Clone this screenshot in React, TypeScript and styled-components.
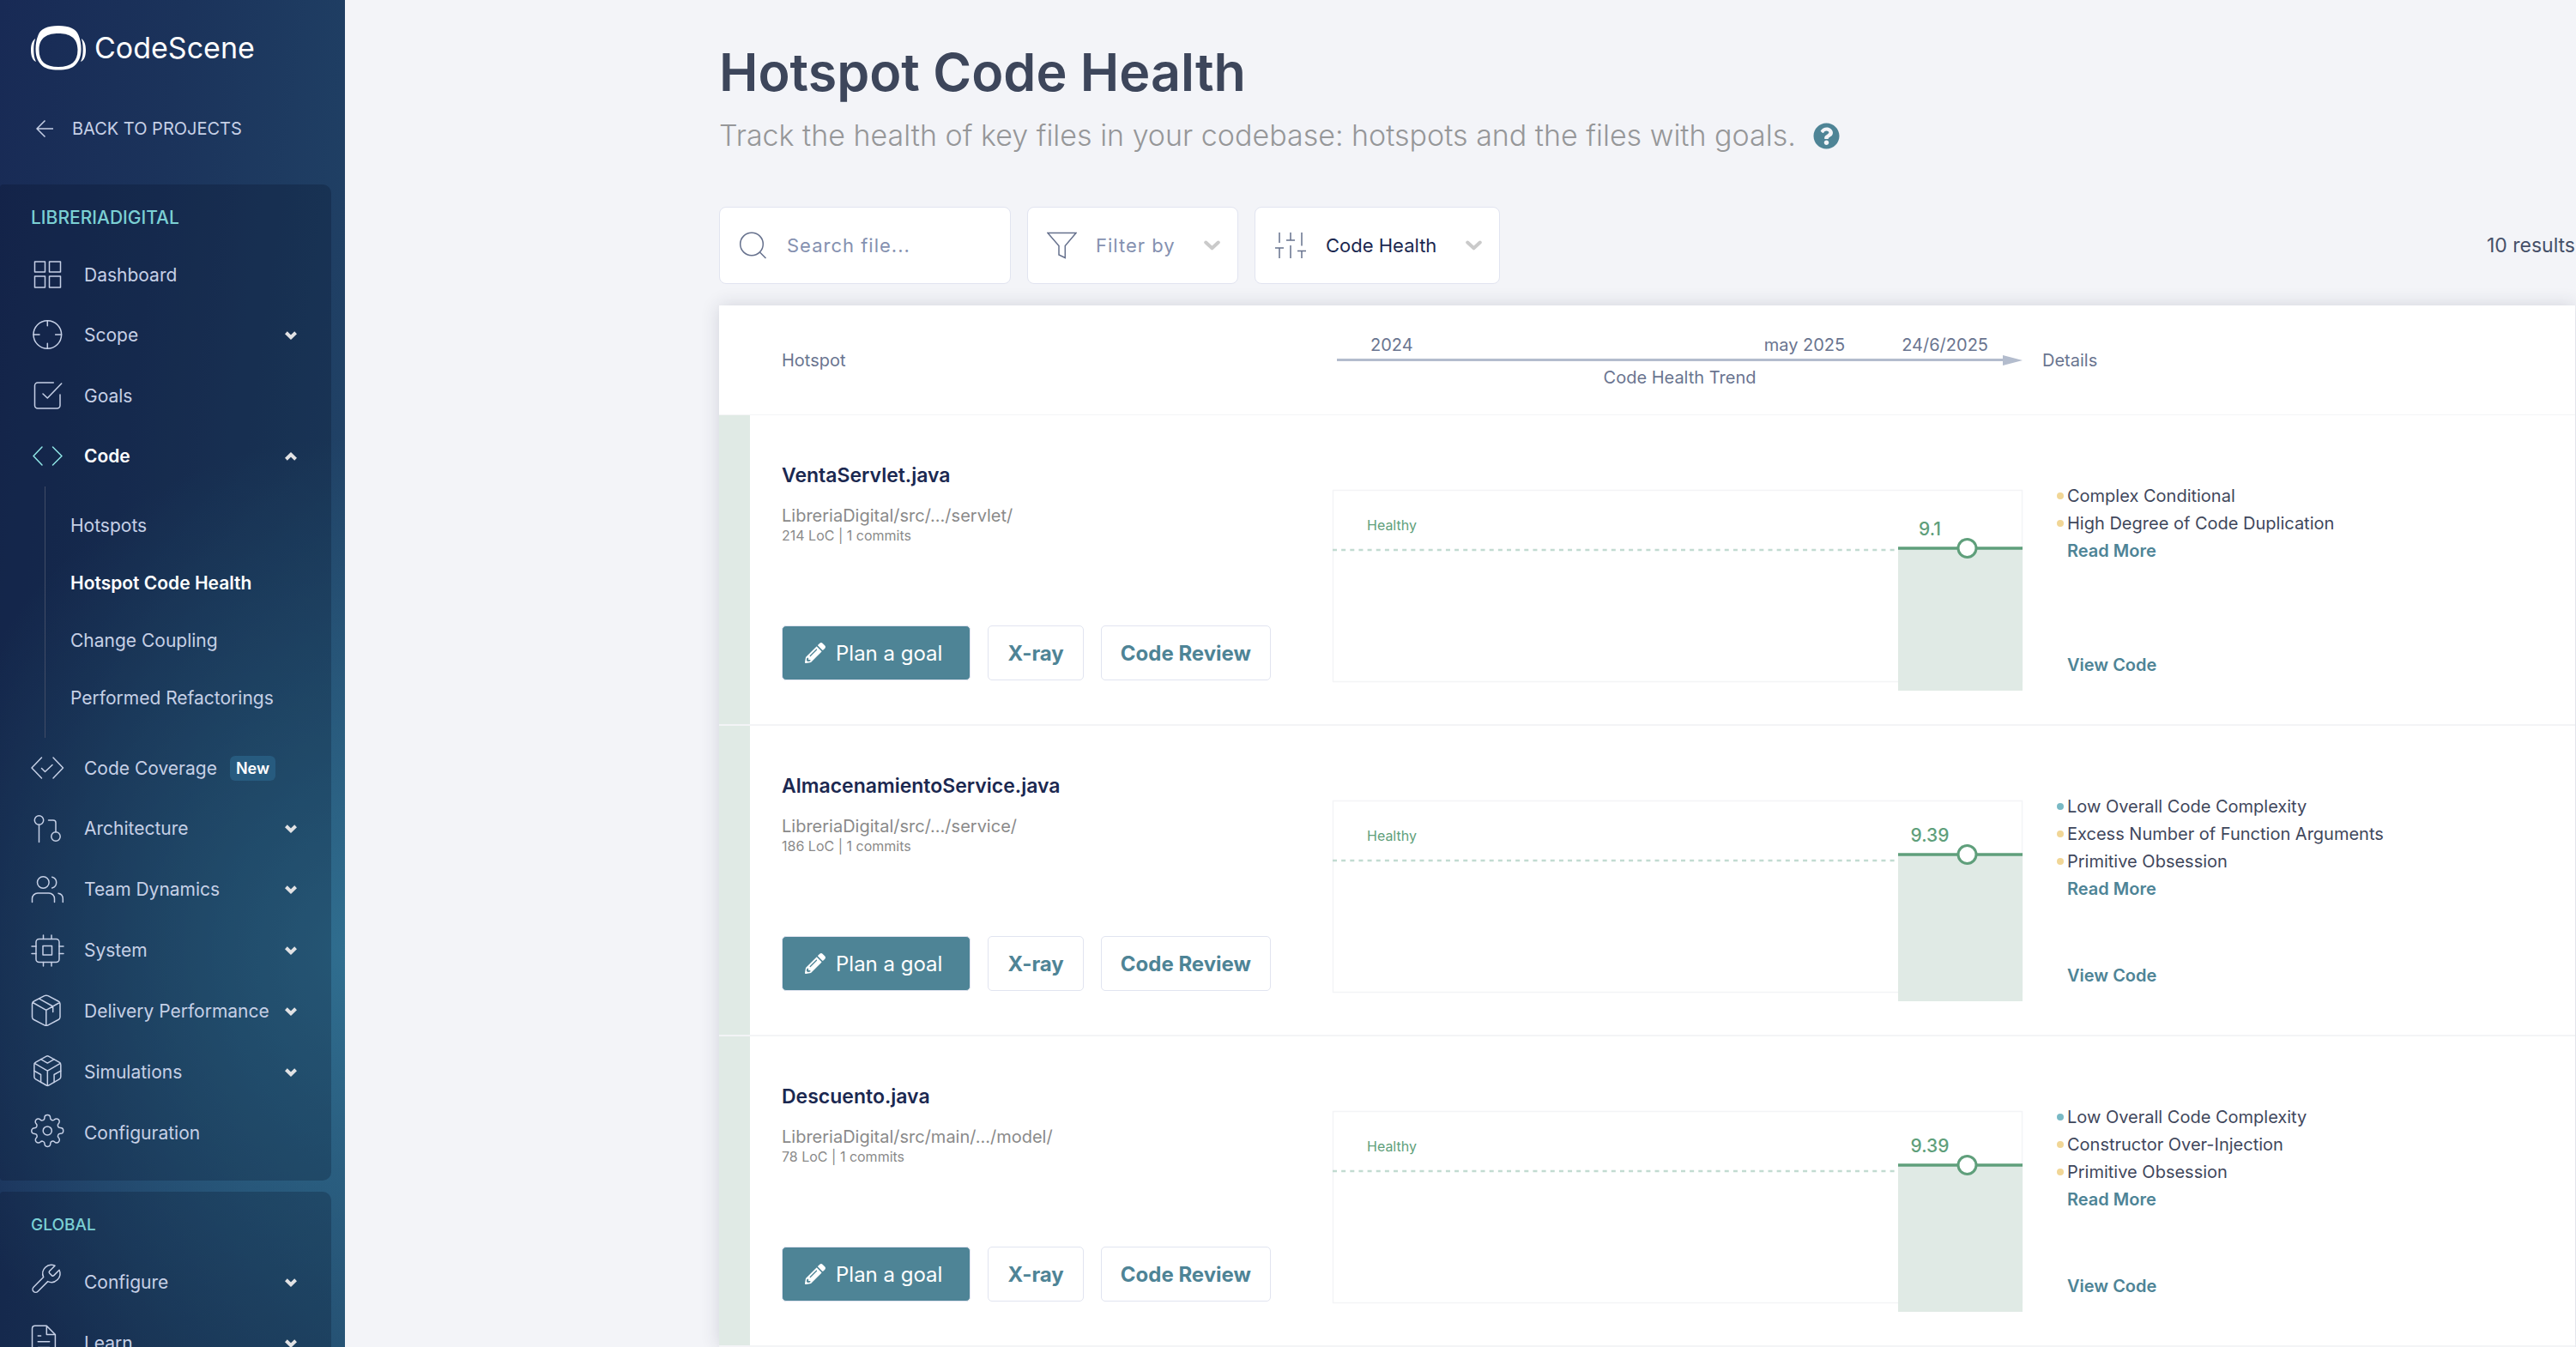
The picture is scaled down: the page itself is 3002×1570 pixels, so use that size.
import React from 'react';
import styled, { createGlobalStyle, css } from 'styled-components';
import { FaPencilAlt, FaQuestionCircle } from 'react-icons/fa';

const color = {
  page: '#f3f4f8',
  ink: '#3f475c',
  title: '#1b2850',
  slate: '#6a7590',
  muted: '#8591b0',
  grey: '#8a8a8a',
  teal: '#4e8496',
  aqua: '#7bd0d4',
  nav: '#c6d0e6',
  green: '#5f9f7b',
  mint: '#e0eae5',
  line: '#f3f4f6',
  border: '#e1e4f0',
  yellow: '#f1d696',
  cyan: '#79b9c5',
};

const GlobalStyle = createGlobalStyle`
  *, *::before, *::after { box-sizing: border-box; }
  body {
    margin: 0;
    background: ${color.page};
    color: ${color.ink};
    font-family: Inter, "Liberation Sans", sans-serif;
    font-size: 20px;
  }
  button, input, select { font: inherit; color: inherit; }
  a { color: inherit; text-decoration: none; }
  ul { list-style: none; margin: 0; padding: 0; }
`;

const Page = styled.div`
  display: flex;
  min-height: 100vh;
`;

/* ---------- Sidebar ---------- */

const Sidebar = styled.aside`
  position: sticky;
  top: 0;
  flex: none;
  width: 402px;
  height: 100vh;
  overflow: hidden;
  display: flex;
  flex-direction: column;
  background:
    radial-gradient(ellipse 520px 600px at 410px 1110px, rgba(50, 117, 150, 0.85), rgba(50, 117, 150, 0) 100%),
    linear-gradient(98deg, #182a55 0%, #1b335b 35%, #234a6c 100%);

  > * { flex: none; }
`;

const Brand = styled.a`
  display: flex;
  align-items: center;
  gap: 10px;
  height: 52px;
  margin: 30px 36px 0;
  color: #fff;
  font-size: 34px;
  line-height: 40px;

  svg { flex: none; }
`;

const BackLink = styled.a`
  display: flex;
  align-items: center;
  gap: 22px;
  height: 40px;
  margin: 48px 42px 45px;
  color: ${color.nav};
  font-size: 20px;
`;

const Panels = styled.nav`
  display: flex;
  flex-direction: column;
  gap: 13px;
  padding-right: 16px;
`;

const Panel = styled.section`
  padding: 26px 0 21px;
  border-radius: 4px 10px 10px 4px;
  background: rgba(5, 12, 35, 0.24);
`;

const PanelTitle = styled.h2<{ $small?: boolean }>`
  margin: 0 0 18px;
  padding: 0 36px;
  color: ${color.aqua};
  font-size: ${(p) => (p.$small ? 19 : 21)}px;
  font-weight: 500;
  line-height: 26px;
`;

const rowStyle = css<{ $active?: boolean }>`
  display: flex;
  align-items: center;
  width: 100%;
  padding: 0 40px 0 36px;
  border: 0;
  background: none;
  color: ${(p) => (p.$active ? '#fff' : color.nav)};
  font-size: 21px;
  font-weight: ${(p) => (p.$active ? 600 : 400)};
  text-align: left;
  white-space: nowrap;
`;

const NavLink = styled.a<{ $active?: boolean }>`
  ${rowStyle}
  height: 70px;
`;

const NavToggle = styled.button<{ $active?: boolean }>`
  ${rowStyle}
  height: 71px;
`;

const NavIcon = styled.svg<{ $active?: boolean }>`
  flex: none;
  width: 38px;
  height: 38px;
  margin-right: 24px;
  overflow: visible;
  fill: none;
  stroke: ${(p) => (p.$active ? '#8fe6e6' : color.nav)};
  stroke-width: 1.5;
  stroke-linecap: round;
  stroke-linejoin: round;

  * { vector-effect: non-scaling-stroke; }
`;

const NavChevron = styled.svg`
  flex: none;
  width: 14px;
  height: 10px;
  margin-left: auto;
  fill: none;
  stroke: #e2e2e4;
  stroke-width: 4;
`;

const NewBadge = styled.span`
  margin-left: 15px;
  padding: 0 7px;
  border-radius: 6px;
  background: #275b7f;
  color: #fff;
  font-size: 18px;
  font-weight: 600;
  line-height: 29px;
`;

const SubMenu = styled.ul`
  margin-left: 52px;
  padding: 12px 0 13px 29px;
  border-left: 1px solid #414c66;
`;

const SubLink = styled.a<{ $active?: boolean }>`
  display: flex;
  align-items: center;
  height: 67px;
  color: ${(p) => (p.$active ? '#fff' : color.nav)};
  font-size: 21px;
  font-weight: ${(p) => (p.$active ? 600 : 400)};
  white-space: nowrap;
`;

/* ---------- Main column ---------- */

const Main = styled.main`
  flex: 1;
  min-width: 0;
  padding: 46px 1px 0 436px;
`;

const Title = styled.h1`
  margin: 0;
  color: #3d465b;
  font-size: 61px;
  font-weight: 600;
  line-height: 76px;
`;

const Subtitle = styled.p`
  display: flex;
  align-items: center;
  gap: 20px;
  margin: 12px 0 59px;
  color: #969799;
  font-size: 34px;
  font-weight: 300;
  line-height: 48px;
  white-space: nowrap;
`;

const HelpButton = styled.button`
  display: flex;
  padding: 0;
  border: 0;
  background: none;
  color: ${color.teal};
  font-size: 31px;
`;

const Toolbar = styled.div`
  display: flex;
  align-items: center;
  gap: 19px;
  margin-bottom: 25px;
`;

const Field = styled.label<{ $width: number }>`
  display: flex;
  align-items: center;
  width: ${(p) => p.$width}px;
  height: 90px;
  padding: 0 20px 0 22px;
  border: 1px solid ${color.border};
  border-radius: 8px;
  background: #fff;
`;

const FieldIcon = styled.svg`
  flex: none;
  height: 32px;
  margin-right: 22px;
  fill: none;
  stroke: #66718d;
  stroke-width: 1.5;
`;

const FieldChevron = styled.svg`
  flex: none;
  width: 19px;
  height: 12px;
  fill: none;
  stroke: #cacaca;
  stroke-width: 4;
  stroke-linecap: round;
  stroke-linejoin: round;
`;

const SearchInput = styled.input`
  flex: 1;
  min-width: 0;
  padding: 0;
  border: 0;
  outline: 0;
  background: none;
  font-size: 22px;
  letter-spacing: 1px;

  &::placeholder { color: ${color.muted}; opacity: 1; }
`;

const Select = styled.select<{ $set?: boolean }>`
  flex: 1;
  min-width: 0;
  padding: 0;
  border: 0;
  outline: 0;
  appearance: none;
  background: none;
  color: ${(p) => (p.$set ? color.title : color.muted)};
  font-size: 22px;
  letter-spacing: ${(p) => (p.$set ? 'normal' : '1px')};
`;

const Results = styled.output`
  margin-left: auto;
  color: #465068;
  font-size: 23px;
`;

/* ---------- Table ---------- */

const Table = styled.table`
  width: 100%;
  table-layout: fixed;
  border-collapse: separate;
  border-spacing: 0;
  background: #fff;
  box-shadow: 0 0 20px rgba(40, 45, 70, 0.16);
`;

const Col = styled.col<{ $width?: number }>`
  width: ${(p) => (p.$width ? `${p.$width}px` : 'auto')};
`;

const HeadCell = styled.th<{ $pad?: number }>`
  height: 128px;
  padding: 0 0 0 ${(p) => p.$pad ?? 0}px;
  border-bottom: 1px solid ${color.line};
  color: ${color.slate};
  font-size: 20px;
  font-weight: 400;
  line-height: 24px;
  text-align: left;
`;

const Timeline = styled.div`
  display: flex;
  flex-direction: column;
  padding-top: 2px;
`;

const Dates = styled.div`
  display: flex;
  gap: 66px;
  padding: 0 40px 0 44px;

  span:first-child { margin-right: auto; }
`;

const Arrow = styled.div`
  display: flex;
  align-items: center;
  height: 12px;
  margin-left: 5px;

  &::before {
    content: '';
    flex: 1;
    height: 3px;
    background: #b3bccd;
  }

  &::after {
    content: '';
    border-left: 23px solid #b3bccd;
    border-top: 6px solid transparent;
    border-bottom: 6px solid transparent;
  }
`;

const TrendLabel = styled.div`
  padding: 2px 0 0 5px;
  text-align: center;
`;

const Cell = styled.td`
  height: 362px;
  padding: 0;
  border-bottom: 2px solid ${color.line};
  vertical-align: top;
`;

const StatusCell = styled(Cell)`
  background: ${color.mint};
  background-clip: padding-box;
`;

const Hotspot = styled.div`
  display: flex;
  flex-direction: column;
  height: 309px;
  padding: 54px 0 0 37px;
`;

const FileName = styled.h3`
  margin: 0 0 18px;
  color: ${color.title};
  font-size: 23px;
  font-weight: 600;
  line-height: 32px;
`;

const FilePath = styled.span`
  color: ${color.grey};
  font-size: 20px;
  line-height: 26px;
`;

const FileMeta = styled.span`
  color: ${color.grey};
  font-size: 16px;
  line-height: 20px;
`;

const Actions = styled.div`
  display: flex;
  gap: 20px;
  margin-top: auto;
`;

const Action = styled.button<{ $primary?: boolean }>`
  display: flex;
  align-items: center;
  justify-content: center;
  gap: 12px;
  height: 64px;
  padding: 0 ${(p) => (p.$primary ? 32 : 22)}px 0 ${(p) => (p.$primary ? 26 : 22)}px;
  border: 1px solid ${color.border};
  border-radius: 5px;
  background: ${(p) => (p.$primary ? color.teal : '#fff')};
  color: ${(p) => (p.$primary ? '#fff' : color.teal)};
  font-size: 24px;
  font-weight: ${(p) => (p.$primary ? 400 : 700)};
  white-space: nowrap;
`;

const Chart = styled.svg`
  display: block;
  width: 100%;
  height: auto;
  margin-top: 86px;
  overflow: visible;
`;

const Details = styled.div`
  display: flex;
  flex-direction: column;
  height: 307px;
  padding: 78px 0 0 52px;
  color: ${color.ink};
  font-size: 20px;
  line-height: 32px;
`;

const Finding = styled.li<{ $good?: boolean }>`
  display: flex;
  align-items: center;
  gap: 4px;
  margin-left: -12px;
  white-space: nowrap;

  &::before {
    content: '';
    width: 8px;
    height: 8px;
    border-radius: 50%;
    background: ${(p) => (p.$good ? color.cyan : color.yellow)};
  }
`;

const DetailLink = styled.a<{ $last?: boolean }>`
  margin-top: ${(p) => (p.$last ? 'auto' : 0)};
  color: ${color.teal};
  font-weight: 600;
`;

/* ---------- Icons ---------- */

const icons: Record<string, React.ReactNode> = {
  dashboard: (
    <>
      <rect x="4.5" y="4" width="12" height="12" />
      <rect x="21.5" y="4" width="13" height="12" />
      <rect x="4.5" y="21" width="12" height="13" />
      <rect x="21.5" y="21" width="13" height="13" />
    </>
  ),
  scope: (
    <>
      <circle cx="19.3" cy="18" r="16.3" />
      <path d="M19.3 1.7v6M19.3 28.3v6M3 18h7M28.6 18h7" />
    </>
  ),
  goals: (
    <path d="M26.3 4H8a3.5 3.5 0 0 0-3.5 3.5v23A3.5 3.5 0 0 0 8 34h22.500a3.500 3.500 0 0 0 3.500-3.500V18M14 17l5.300 5L35.700 5" />
  ),
  code: <path d="M13 8 3 18.500 13 29M25.500 8l10.500 10.500L25.500 29" />,
  coverage: <path d="M12.500 7 1 19l11.500 12M26 7l11.500 12L26 31M12.500 19.500l4 4L25 15.500" />,
  architecture: (
    <>
      <circle cx="9.500" cy="9" r="5.200" />
      <circle cx="29" cy="28" r="5.200" />
      <path d="M9.500 14.200V34.500M20.500 9h5.500a3 3 0 0 1 3 3v10.800" />
    </>
  ),
  team: (
    <>
      <circle cx="14.300" cy="10.500" r="6.800" />
      <path d="M1.500 33.500v-4a6.500 6.500 0 0 1 6.500-6.500h13a6.500 6.500 0 0 1 6.500 6.500v4M24.700 4.200a6.600 6.600 0 0 1 0 12.800M32 23.200a6.500 6.500 0 0 1 5.300 6.300v4" />
    </>
  ),
  system: (
    <>
      <rect x="6" y="5.500" width="27" height="27" rx="3.500" />
      <rect x="14" y="13.500" width="10.500" height="10.500" />
      <path d="M14.500 5.500V1M24 5.500V1M14.500 37v-4.500M24 37v-4.500M6 14H1M6 22.500H1M38 14h-5M38 22.500h-5" />
    </>
  ),
  delivery: (
    <path d="M15.800 .7 3.500 7A3.500 3.500 0 0 0 1.500 10v15.500a3.500 3.500 0 0 0 2 3L15.800 34.800a4.500 4.500 0 0 0 4.200 0L32 28.500a3.500 3.500 0 0 0 2-3V10a3.500 3.500 0 0 0-2-3L20 .7a4.500 4.500 0 0 0-4.200 0zM2.200 8.500 17.800 17.300 33.500 8.500M17.800 17.300V35M9.700 4.200l16 8.800v6.500" />
  ),
  simulations: (
    <g transform="translate(-1.3 -3.600) scale(1.720)">
      <path d="M21 16V8a2 2 0 0 0-1-1.730l-7-4a2 2 0 0 0-2 0l-7 4A2 2 0 0 0 3 8v8a2 2 0 0 0 1 1.730l7 4a2 2 0 0 0 2 0l7-4A2 2 0 0 0 21 16z" />
      <path d="M7.500 4.210 12 6.810l4.500-2.600M7.500 19.790V14.600L3 12M21 12l-4.500 2.600v5.190M3.270 6.960 12 12.010l8.730-5.050M12 22.080V12" />
    </g>
  ),
  configuration: (
    <g transform="translate(-.9 -3.200) scale(1.680)">
      <circle cx="12" cy="12" r="3" />
      <path d="M19.400 15a1.650 1.650 0 0 0 .330 1.820l.060.060a2 2 0 0 1 0 2.830 2 2 0 0 1-2.830 0l-.060-.060a1.650 1.650 0 0 0-1.820-.330 1.650 1.650 0 0 0-1 1.510V21a2 2 0 0 1-2 2 2 2 0 0 1-2-2v-.090A1.650 1.650 0 0 0 9 19.400a1.650 1.650 0 0 0-1.820.330l-.060.060a2 2 0 0 1-2.830 0 2 2 0 0 1 0-2.830l.060-.060a1.650 1.650 0 0 0 .330-1.820 1.650 1.650 0 0 0-1.510-1H3a2 2 0 0 1-2-2 2 2 0 0 1 2-2h.090A1.650 1.650 0 0 0 4.600 9a1.650 1.650 0 0 0-.330-1.820l-.060-.060a2 2 0 0 1 0-2.830 2 2 0 0 1 2.830 0l.060.060a1.650 1.650 0 0 0 1.820.330H9a1.650 1.650 0 0 0 1-1.510V3a2 2 0 0 1 2-2 2 2 0 0 1 2 2v.090a1.650 1.650 0 0 0 1 1.510 1.650 1.650 0 0 0 1.820-.330l.060-.060a2 2 0 0 1 2.830 0 2 2 0 0 1 0 2.830l-.060.060a1.650 1.650 0 0 0-.330 1.820V9a1.650 1.650 0 0 0 1.510 1H21a2 2 0 0 1 2 2 2 2 0 0 1-2 2h-.090a1.650 1.650 0 0 0-1.510 1z" />
    </g>
  ),
  configure: (
    <g transform="translate(-3 -5) scale(1.680)">
      <path d="M14.700 6.300a1 1 0 0 0 0 1.400l1.600 1.600a1 1 0 0 0 1.400 0l3.770-3.770a6 6 0 0 1-7.940 7.940l-6.910 6.910a2.120 2.120 0 0 1-3-3l6.910-6.910a6 6 0 0 1 7.940-7.940l-3.760 3.760z" />
    </g>
  ),
  learn: (
    <g transform="translate(-5.200 -5) scale(1.680)">
      <path d="M14 2H6a2 2 0 0 0-2 2v16a2 2 0 0 0 2 2h12a2 2 0 0 0 2-2V8zM14 2v6h6M16 13H8M16 17H8M10 9H8" />
    </g>
  ),
};

function Icon({ name, active }: { name: string; active?: boolean }) {
  return (
    <NavIcon $active={active} viewBox="0 0 38 38" aria-hidden="true">
      {icons[name]}
    </NavIcon>
  );
}

function Logo() {
  return (
    <svg width="64" height="52" viewBox="0 0 64 52" fill="#fff" aria-hidden="true">
      <path
        fillRule="evenodd"
        d="M32 0C45 0 52.500 3.500 55.500 11C57.500 16 58.500 21 58.500 27C58.500 34 57 40 52.500 45C48 50 41 51.500 32 51.500C23 51.500 16 50 11.500 45C7 40 5.500 34 5.500 27C5.500 21 6.500 16 8.500 11C11.500 3.500 19 0 32 0ZM32 9C20 9 9.500 13 9.500 28C9.500 42 17 48 32 48C47 48 54.500 42 54.500 28C54.500 13 44 9 32 9Z"
      />
      <path d="M5.200 15C1.500 17.500 0 22 0 28.500C0 35.500 2 40.500 6 42C3.800 38 3.300 33 3.300 27.500C3.300 22.500 3.900 18.500 5.200 15Z" />
      <path d="M58.800 15C62.500 17.500 64 22 64 28.500C64 35.500 62 40.500 58 42C60.200 38 60.700 33 60.700 27.500C60.700 22.500 60.100 18.500 58.800 15Z" />
    </svg>
  );
}

function Chevron({ up }: { up?: boolean }) {
  return (
    <NavChevron viewBox="0 0 14 10" aria-hidden="true">
      <path d={up ? 'M1.400 8.200 7 2.800l5.600 5.400' : 'M1.400 1.800 7 7.200l5.600-5.400'} />
    </NavChevron>
  );
}

/* ---------- Data ---------- */

type Item = { icon: string; label: string; expandable?: boolean; badge?: string; children?: string[] };

const projectItems: Item[] = [
  { icon: 'dashboard', label: 'Dashboard' },
  { icon: 'scope', label: 'Scope', expandable: true },
  { icon: 'goals', label: 'Goals' },
  {
    icon: 'code',
    label: 'Code',
    expandable: true,
    children: ['Hotspots', 'Hotspot Code Health', 'Change Coupling', 'Performed Refactorings'],
  },
  { icon: 'coverage', label: 'Code Coverage', badge: 'New' },
  { icon: 'architecture', label: 'Architecture', expandable: true },
  { icon: 'team', label: 'Team Dynamics', expandable: true },
  { icon: 'system', label: 'System', expandable: true },
  { icon: 'delivery', label: 'Delivery Performance', expandable: true },
  { icon: 'simulations', label: 'Simulations', expandable: true },
  { icon: 'configuration', label: 'Configuration' },
];

const globalItems: Item[] = [
  { icon: 'configure', label: 'Configure', expandable: true },
  { icon: 'learn', label: 'Learn', expandable: true },
];

type File = {
  name: string;
  path: string;
  loc: number;
  score: number;
  level: number;
  findings: { text: string; good?: boolean }[];
};

const files: File[] = [
  {
    name: 'VentaServlet.java',
    path: 'LibreriaDigital/src/.../servlet/',
    loc: 214,
    score: 9.1,
    level: 69,
    findings: [{ text: 'Complex Conditional' }, { text: 'High Degree of Code Duplication' }],
  },
  {
    name: 'AlmacenamientoService.java',
    path: 'LibreriaDigital/src/.../service/',
    loc: 186,
    score: 9.39,
    level: 64,
    findings: [
      { text: 'Low Overall Code Complexity', good: true },
      { text: 'Excess Number of Function Arguments' },
      { text: 'Primitive Obsession' },
    ],
  },
  {
    name: 'Descuento.java',
    path: 'LibreriaDigital/src/main/.../model/',
    loc: 78,
    score: 9.39,
    level: 64,
    findings: [
      { text: 'Low Overall Code Complexity', good: true },
      { text: 'Constructor Over-Injection' },
      { text: 'Primitive Obsession' },
    ],
  },
];

/* ---------- Components ---------- */

function NavItem({ item }: { item: Item }) {
  const open = Boolean(item.children);
  if (!item.expandable) {
    return (
      <li>
        <NavLink href="#">
          <Icon name={item.icon} />
          {item.label}
          {item.badge && <NewBadge>{item.badge}</NewBadge>}
        </NavLink>
      </li>
    );
  }
  return (
    <li>
      <NavToggle type="button" $active={open} aria-expanded={open}>
        <Icon name={item.icon} active={open} />
        {item.label}
        <Chevron up={open} />
      </NavToggle>
      {item.children && (
        <SubMenu>
          {item.children.map((label) => (
            <li key={label}>
              <SubLink href="#" $active={label === 'Hotspot Code Health'}>
                {label}
              </SubLink>
            </li>
          ))}
        </SubMenu>
      )}
    </li>
  );
}

function TrendChart({ score, level }: { score: number; level: number }) {
  return (
    <Chart viewBox="0 0 804 236" role="img" aria-label={`Code health ${score}`}>
      <rect x="0.5" y="1.5" width="803" height="223" fill="none" stroke={color.line} strokeWidth="1.5" />
      <text x="40" y="48" fontSize="16" fill={color.green}>
        Healthy
      </text>
      <line x1="0" x2="659" y1="71" y2="71" stroke="#c2dbd1" strokeWidth="2.500" strokeDasharray="5 5.150" />
      <rect x="659" y={level} width="145" height={235 - level} fill={color.mint} />
      <line x1="659" x2="804" y1={level} y2={level} stroke={color.green} strokeWidth="3.500" />
      <circle cx="739.500" cy={level} r="10.500" fill="#fff" stroke={color.green} strokeWidth="3" />
      <text x="696" y={level - 15} fontSize="21" fontWeight="500" textAnchor="middle" fill={color.green}>
        {score}
      </text>
    </Chart>
  );
}

export default function App() {
  return (
    <Page>
      <GlobalStyle />
      <Sidebar>
        <Brand href="#">
          <Logo />
          CodeScene
        </Brand>
        <BackLink href="#">
          <svg width="20" height="20" viewBox="0 0 20 20" fill="none" stroke={color.nav} strokeWidth="1.500" aria-hidden="true">
            <path d="M20 10H1M10.500 .5 1 10l9.500 9.500" />
          </svg>
          BACK TO PROJECTS
        </BackLink>
        <Panels>
          <Panel>
            <PanelTitle>LIBRERIADIGITAL</PanelTitle>
            <ul>
              {projectItems.map((item) => (
                <NavItem key={item.label} item={item} />
              ))}
            </ul>
          </Panel>
          <Panel>
            <PanelTitle $small>GLOBAL</PanelTitle>
            <ul>
              {globalItems.map((item) => (
                <NavItem key={item.label} item={item} />
              ))}
            </ul>
          </Panel>
        </Panels>
      </Sidebar>

      <Main>
        <Title>Hotspot Code Health</Title>
        <Subtitle>
          Track the health of key files in your codebase: hotspots and the files with goals.
          <HelpButton type="button" aria-label="Help">
            <FaQuestionCircle />
          </HelpButton>
        </Subtitle>

        <Toolbar>
          <Field $width={340}>
            <FieldIcon width="34" viewBox="0 0 34 32" aria-hidden="true">
              <circle cx="15" cy="14.500" r="13.300" />
              <path d="M24.500 24 31.500 31" />
            </FieldIcon>
            <SearchInput type="search" placeholder="Search file..." aria-label="Search file" />
          </Field>
          <Field $width={246}>
            <FieldIcon width="35" viewBox="0 0 35 32" aria-hidden="true">
              <path d="M1 1.500h33L21.300 16.500v14L14 27V16.500z" />
            </FieldIcon>
            <Select aria-label="Filter by">
              <option>Filter by</option>
            </Select>
            <FieldChevron viewBox="0 0 19 12" aria-hidden="true">
              <path d="M2.200 2.500 9.500 9.300l7.300-6.800" />
            </FieldChevron>
          </Field>
          <Field $width={286}>
            <FieldIcon width="38" viewBox="0 0 38 32" aria-hidden="true">
              <path d="M6 1v12M1 19h10M6 19v12M19 1v9M14 10h10M19 16v15M32 1v15.500M27 22.500h10M32 22.500V31" />
            </FieldIcon>
            <Select $set aria-label="Sort by">
              <option>Code Health</option>
            </Select>
            <FieldChevron viewBox="0 0 19 12" aria-hidden="true">
              <path d="M2.200 2.500 9.500 9.300l7.300-6.800" />
            </FieldChevron>
          </Field>
          <Results>10 results</Results>
        </Toolbar>

        <Table>
          <colgroup>
            <Col $width={36} />
            <Col $width={679} />
            <Col $width={804} />
            <Col />
          </colgroup>
          <thead>
            <tr>
              <HeadCell aria-label="Status" />
              <HeadCell scope="col" $pad={37}>
                Hotspot
              </HeadCell>
              <HeadCell scope="col">
                <Timeline>
                  <Dates>
                    <span>2024</span>
                    <span>may 2025</span>
                    <span>24/6/2025</span>
                  </Dates>
                  <Arrow />
                  <TrendLabel>Code Health Trend</TrendLabel>
                </Timeline>
              </HeadCell>
              <HeadCell scope="col" $pad={23}>
                Details
              </HeadCell>
            </tr>
          </thead>
          <tbody>
            {files.map((file) => (
              <tr key={file.name}>
                <StatusCell />
                <Cell>
                  <Hotspot>
                    <FileName>{file.name}</FileName>
                    <FilePath>{file.path}</FilePath>
                    <FileMeta>{`${file.loc} LoC | 1 commits`}</FileMeta>
                    <Actions>
                      <Action type="button" $primary>
                        <FaPencilAlt aria-hidden="true" />
                        Plan a goal
                      </Action>
                      <Action type="button">X-ray</Action>
                      <Action type="button">Code Review</Action>
                    </Actions>
                  </Hotspot>
                </Cell>
                <Cell>
                  <TrendChart score={file.score} level={file.level} />
                </Cell>
                <Cell>
                  <Details>
                    <ul>
                      {file.findings.map((finding) => (
                        <Finding key={finding.text} $good={finding.good}>
                          {finding.text}
                        </Finding>
                      ))}
                    </ul>
                    <DetailLink href="#">Read More</DetailLink>
                    <DetailLink href="#" $last>
                      View Code
                    </DetailLink>
                  </Details>
                </Cell>
              </tr>
            ))}
          </tbody>
        </Table>
      </Main>
    </Page>
  );
}
